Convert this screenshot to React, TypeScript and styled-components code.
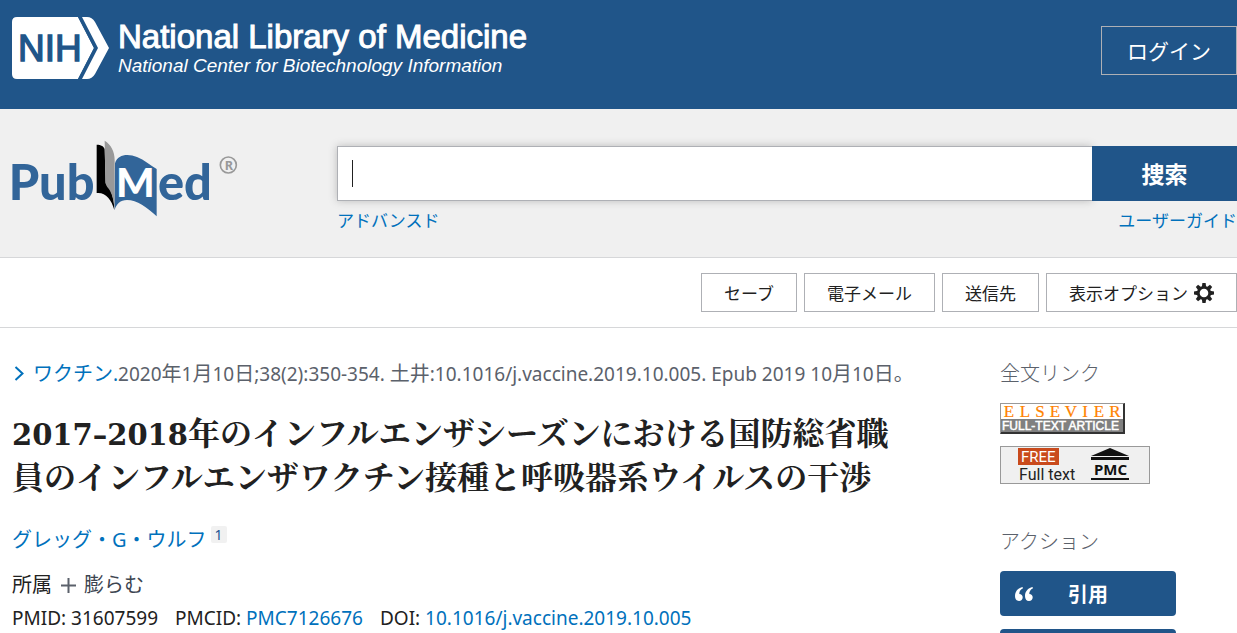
import React from 'react';
import styled, { createGlobalStyle } from 'styled-components';

const colors = {
  navy: '#205589',
  link: '#0071bc',
  ink: '#212121',
  muted: '#5b616b',
  line: '#d6d7d9',
  edge: '#aeb0b5',
  panel: '#f0f0f0',
};

const GlobalStyle = createGlobalStyle`
  *, *::before, *::after { box-sizing: border-box; }
  body {
    margin: 0;
    background: #fff;
    color: ${colors.ink};
    font-family: "Noto Sans", "Noto Sans CJK JP", sans-serif;
    font-size: 20px;
    line-height: 28px;
  }
  a { color: ${colors.link}; text-decoration: none; }
  button { font-family: inherit; cursor: pointer; }
  svg { display: block; flex: none; overflow: visible; }
`;

const Page = styled.div`
  height: 100vh;
  overflow: hidden;
`;

const TopBar = styled.header`
  display: flex;
  justify-content: space-between;
  align-items: flex-start;
  height: 109px;
  padding: 17px 0 0 12px;
  background: ${colors.navy};
`;

const Brand = styled.a`
  display: flex;
  gap: 8px;
  color: #fff;
  font-family: "Liberation Sans", sans-serif;
  white-space: nowrap;
`;

const BrandText = styled.span`
  display: flex;
  flex-direction: column;
  padding-top: 3px;
`;

const BrandName = styled.span`
  font-size: 33px;
  line-height: 34px;
  -webkit-text-stroke: 1px #fff;
`;

const BrandCenter = styled.span`
  font-size: 19px;
  line-height: 24px;
  font-style: italic;
`;

const LoginButton = styled.button`
  height: 49px;
  margin-top: 9px;
  padding: 0 25px 2px;
  border: 1px solid ${colors.edge};
  background: transparent;
  color: #fff;
  font-size: 21px;
`;

const SearchBand = styled.section`
  display: grid;
  grid-template-columns: 325px 1fr;
  height: 149px;
  padding: 31px 0 0 12px;
  background: ${colors.panel};
  border-bottom: 1px solid ${colors.line};
`;

const SearchForm = styled.form`
  padding-top: 6px;
`;

const SearchRow = styled.div`
  position: relative;
  display: flex;
  height: 55px;
`;

const SearchInput = styled.input`
  flex: 1;
  min-width: 0;
  padding: 0 14px;
  border: 1px solid ${colors.edge};
  border-right: 0;
  background: #fff;
  box-shadow: 0 0 8px #bbb;
  color: ${colors.ink};
  font: inherit;
  outline: none;
`;

const Caret = styled.span`
  position: absolute;
  left: 15px;
  top: 14px;
  width: 1px;
  height: 27px;
  background: ${colors.ink};
`;

const SearchButton = styled.button`
  position: relative;
  width: 145px;
  padding: 0 0 2px;
  border: 0;
  background: ${colors.navy};
  color: #fff;
  font-size: 23px;
  font-weight: 700;
`;

const SearchLinks = styled.nav`
  display: flex;
  justify-content: space-between;
  padding-top: 6px;
  font-size: 17px;
`;

const Toolbar = styled.div`
  display: flex;
  justify-content: flex-end;
  gap: 7px;
  padding: 15px 0;
  border-bottom: 1px solid ${colors.line};
`;

const ToolButton = styled.button`
  display: flex;
  align-items: center;
  gap: 6px;
  height: 39px;
  padding: 0 22px;
  border: 1px solid ${colors.edge};
  background: #fff;
  color: ${colors.ink};
  font-size: 17px;
`;

const Content = styled.main`
  display: grid;
  grid-template-columns: minmax(0, 1fr) 237px;
  column-gap: 84px;
  padding: 32px 0 0 12px;
`;

const Citation = styled.div`
  display: flex;
  align-items: center;
  gap: 7px;
  color: ${colors.muted};
  white-space: nowrap;
`;

const Latin = styled.span`
  font-size: 19px;
`;

const Title = styled.h1`
  margin: 21px 0 0;
  font-family: "Noto Serif CJK JP", "Noto Sans CJK JP", serif;
  font-size: 32px;
  font-weight: 700;
  line-height: 44px;
`;

const Years = styled.span`
  font-family: "DejaVu Serif", serif;
  font-size: 29px;
  line-height: 1;
`;

const Authors = styled.div`
  display: flex;
  gap: 4px;
  margin-top: 29px;
`;

const AffiliationMark = styled.a`
  height: 17px;
  padding: 0 4px;
  border-radius: 2px;
  background: #f1f1f1;
  color: #205493;
  font-size: 14px;
  line-height: 17px;
`;

const Affiliations = styled.div`
  display: flex;
  align-items: center;
  gap: 9px;
  margin-top: 17px;
`;

const ExpandButton = styled.button`
  display: flex;
  align-items: center;
  gap: 8px;
  padding: 0;
  border: 0;
  background: none;
  color: #3d4551;
  font-size: 20px;
  line-height: 28px;
`;

const Identifiers = styled.ul`
  display: flex;
  gap: 17px;
  margin: 5px 0 0;
  padding: 0;
  list-style: none;
  font-size: 19px;
  white-space: nowrap;
`;

const Sidebar = styled.aside`
  display: flex;
  flex-direction: column;
  align-items: flex-start;
`;

const SideTitle = styled.h2`
  margin: 0;
  color: ${colors.muted};
  font-size: 20px;
  font-weight: 300;
  line-height: 28px;
`;

const LinkList = styled.div`
  display: flex;
  flex-direction: column;
  gap: 12px;
  margin: 15px 0 44px;
`;

const ActionList = styled.div`
  display: flex;
  flex-direction: column;
  gap: 13px;
  width: 176px;
  margin-top: 15px;
`;

const ActionButton = styled.button`
  display: flex;
  align-items: center;
  gap: 34px;
  height: 45px;
  padding: 0 15px;
  border: 0;
  border-radius: 4px;
  background: ${colors.navy};
  color: #fff;
  font-size: 20px;
  font-weight: 700;
`;

const NihLogo = () => (
  <svg width="98" height="63" viewBox="0 0 98 63" aria-hidden="true">
    <path d="M5 0H66L82 31L66 62H5Q0 62 0 57V5Q0 0 5 0Z" fill="#fff" />
    <path d="M66 0L82 31L66 62H69L86 31L69 0Z" fill={colors.navy} />
    <path d="M70 0H75Q80 0 83 5L97 31L83 57Q80 62 75 62H70L86 31Z" fill="#fff" />
    <text x="6" y="44" fontFamily="Liberation Sans, sans-serif" fontSize="37" fill={colors.navy} stroke={colors.navy} strokeWidth="1.4">NIH</text>
  </svg>
);

const PubMedLogo = () => (
  <svg width="227" height="77" viewBox="35 28 681 231" role="img" aria-label="PubMed">
    <g fontFamily="Lato, sans-serif" fontWeight="900" fontSize="146" fill="#326599">
      <text x="25" y="209">Pub</text>
      <text x="473" y="209">ed</text>
    </g>
    <path d="M289 42C302 42 311 47 313 56L316 158C331 172 342 202 342 238C333 205 315 184 289 187Z" fill="#000" />
    <path d="M313 30C332 42 343 62 343 88V238C341 210 335 188 325 174Q315 164 315 150Z" fill="#999" />
    <path d="M344 98C352 70 384 68 410 79C432 88 450 104 469 115V257C440 230 410 208 380 208C360 208 348 220 343 238Z" fill="#326599" />
    <text x="347" y="200" fontFamily="Lato, sans-serif" fontWeight="900" fontSize="122" fill="#fff">M</text>
    <circle cx="684" cy="103" r="24" fill="none" stroke="#999" strokeWidth="5" />
    <text x="673" y="117" fontFamily="Noto Sans, sans-serif" fontWeight="700" fontSize="38" fill="#999">R</text>
  </svg>
);

const GearIcon = () => (
  <svg width="20" height="20" viewBox="-10 -10 20 20" aria-hidden="true">
    <circle r="5.7" fill="none" stroke={colors.ink} strokeWidth="2.8" />
    {[0, 45, 90, 135, 180, 225, 270, 315].map((angle) => (
      <path key={angle} d="M-2.2 -6L-1.6 -10H1.6L2.2 -6Z" fill={colors.ink} transform={`rotate(${angle})`} />
    ))}
  </svg>
);

const ChevronIcon = () => (
  <svg width="14" height="16" viewBox="0 0 14 16" aria-hidden="true">
    <path d="M3.5 1L10.500 7.500L3.500 14" fill="none" stroke={colors.link} strokeWidth="2" />
  </svg>
);

const PlusIcon = () => (
  <svg width="15" height="15" viewBox="0 0 15 15" aria-hidden="true">
    <path d="M7.500 0V15M0 7.500H15" stroke={colors.muted} strokeWidth="2" />
  </svg>
);

const QUOTE_MARK = 'M7.500 0C3 1 0 4.500 0 9C0 12 1.500 14 4 14C6.200 14 7.700 12.500 7.700 10.300C7.700 8.200 6.300 6.900 4.300 6.900C4.200 4.500 5.500 2.500 8 1.200Z';

const QuoteIcon = () => (
  <svg width="19" height="14" viewBox="0 0 19 14" fill="#fff" aria-hidden="true">
    <path d={QUOTE_MARK} />
    <path d={QUOTE_MARK} transform="translate(10 0)" />
  </svg>
);

const ElsevierBadge = () => (
  <svg width="125" height="31" viewBox="0 0 125 31" role="img" aria-label="Elsevier">
    <rect width="125" height="31" fill="#333" />
    <path d="M0 0H125L123 1H1V30L0 31Z" fill="#999" />
    <rect x="1" y="1" width="122" height="15" fill="#fff" />
    <rect x="1" y="16" width="122" height="13" fill="#808080" />
    <g fontFamily="Liberation Serif, serif" fontSize="17" fill="#ff8200" stroke="#ff8200" strokeWidth="0.2" textAnchor="middle">
      {'ELSEVIER'.split('').map((letter, i) => (
        <text key={i} x={[9, 25, 40, 55, 71, 85, 99, 115][i]} y="14">{letter}</text>
      ))}
    </g>
    <text x="2" y="27" fontFamily="Liberation Sans, sans-serif" fontSize="12" fill="#fff" stroke="#fff" strokeWidth="0.5">FULL-TEXT ARTICLE</text>
  </svg>
);

const PmcBadge = () => (
  <svg width="150" height="38" viewBox="0 0 150 38" role="img" aria-label="Free full text PMC">
    <rect x="0.5" y="0.5" width="149" height="37" fill="#f0f0f0" stroke="#999" />
    <rect x="18" y="2" width="41" height="17" fill="#c94a1c" />
    <text x="21" y="16" fontFamily="Roboto, sans-serif" fontSize="15" fill="#fff">FREE</text>
    <text x="19" y="34" fontFamily="Roboto, sans-serif" fontSize="16" fill="#222">Full text</text>
    <path d="M91 10L110 2L129 10ZM91 11H129V14H91ZM91 32H129V34H91Z" fill="#111" />
    <text x="94" y="29" fontFamily="Noto Sans, sans-serif" fontWeight="700" fontSize="15" fill="#111">PMC</text>
  </svg>
);

export default function App() {
  return (
    <Page>
      <GlobalStyle />
      <TopBar>
        <Brand href="#">
          <NihLogo />
          <BrandText>
            <BrandName>National Library of Medicine</BrandName>
            <BrandCenter>National Center for Biotechnology Information</BrandCenter>
          </BrandText>
        </Brand>
        <LoginButton type="button">ログイン</LoginButton>
      </TopBar>

      <SearchBand>
        <a href="#"><PubMedLogo /></a>
        <SearchForm onSubmit={(e: React.FormEvent) => e.preventDefault()}>
          <SearchRow>
            <SearchInput type="text" aria-label="捜索" />
            <Caret />
            <SearchButton type="submit">捜索</SearchButton>
          </SearchRow>
          <SearchLinks>
            <a href="#">アドバンスド</a>
            <a href="#">ユーザーガイド</a>
          </SearchLinks>
        </SearchForm>
      </SearchBand>

      <Toolbar>
        <ToolButton type="button">セーブ</ToolButton>
        <ToolButton type="button">電子メール</ToolButton>
        <ToolButton type="button">送信先</ToolButton>
        <ToolButton type="button">表示オプション<GearIcon /></ToolButton>
      </Toolbar>

      <Content>
        <article>
          <Citation>
            <ChevronIcon />
            <span>
              <a href="#">ワクチン<Latin>.</Latin></a>
              <Latin>2020</Latin>年<Latin>1</Latin>月<Latin>10</Latin>日<Latin>;38(2):350-354. </Latin>
              土井<Latin>:10.1016/j.vaccine.2019.10.005. Epub 2019 10</Latin>月<Latin>10</Latin>日。
            </span>
          </Citation>
          <Title>
            <Years>2017–2018</Years>年のインフルエンザシーズンにおける国防総省職員のインフルエンザワクチン接種と呼吸器系ウイルスの干渉
          </Title>
          <Authors>
            <a href="#">グレッグ・G・ウルフ</a>
            <AffiliationMark href="#">1</AffiliationMark>
          </Authors>
          <Affiliations>
            <span>所属</span>
            <ExpandButton type="button"><PlusIcon />膨らむ</ExpandButton>
          </Affiliations>
          <Identifiers>
            <li>PMID: 31607599</li>
            <li>PMCID: <a href="#">PMC7126676</a></li>
            <li>DOI: <a href="#">10.1016/j.vaccine.2019.10.005</a></li>
          </Identifiers>
        </article>
        <Sidebar>
          <SideTitle>全文リンク</SideTitle>
          <LinkList>
            <a href="#"><ElsevierBadge /></a>
            <a href="#"><PmcBadge /></a>
          </LinkList>
          <SideTitle>アクション</SideTitle>
          <ActionList>
            <ActionButton type="button"><QuoteIcon />引用</ActionButton>
            <ActionButton type="button" />
          </ActionList>
        </Sidebar>
      </Content>
    </Page>
  );
}
